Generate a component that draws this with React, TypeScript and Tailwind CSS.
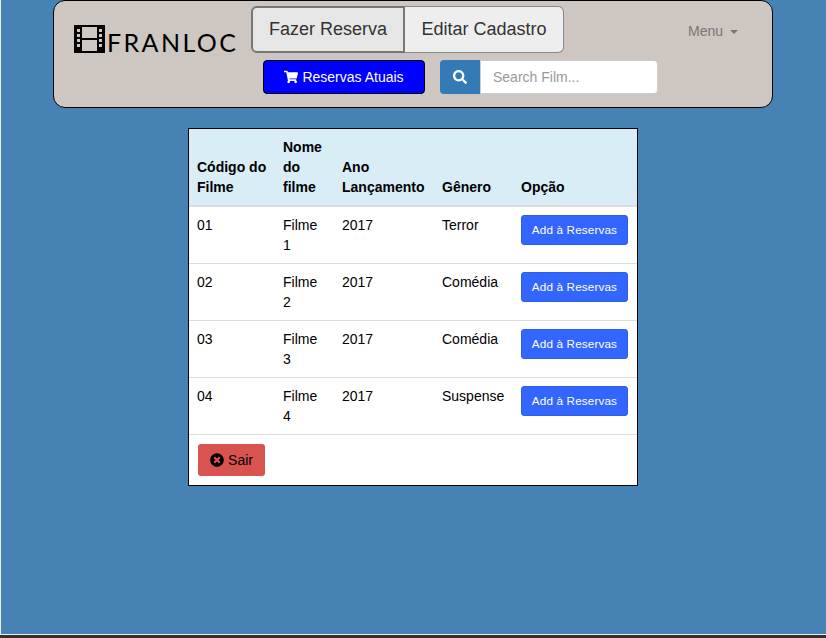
import { FaSearch, FaShoppingCart, FaTimesCircle } from 'react-icons/fa'

const filmes = [
  { codigo: '01', nome: 'Filme 1', ano: '2017', genero: 'Terror' },
  { codigo: '02', nome: 'Filme 2', ano: '2017', genero: 'Comédia' },
  { codigo: '03', nome: 'Filme 3', ano: '2017', genero: 'Comédia' },
  { codigo: '04', nome: 'Filme 4', ano: '2017', genero: 'Suspense' },
]

function FilmLogo() {
  return (
    <svg width="31" height="28" viewBox="0 0 31 28" className="shrink-0">
      <rect x="1" y="1" width="29" height="26" fill="none" stroke="#000" strokeWidth="2" />
      <rect x="1" y="1" width="7" height="26" fill="#000" />
      <rect x="23" y="1" width="7" height="26" fill="#000" />
      <path d="M8 14h15" stroke="#000" strokeWidth="2" />
      {[4, 9, 14, 19].map((y) => (
        <g key={y} fill="#cdc6c1">
          <rect x="3" y={y} width="3" height="3" />
          <rect x="25" y={y} width="3" height="3" />
        </g>
      ))}
    </svg>
  )
}

export default function App() {
  return (
    <div className="h-[638px] w-[826px] overflow-hidden bg-[#333] font-['Liberation_Sans',Arial,sans-serif] text-sm text-black">
      <div className="h-[635px] border-b border-l border-[#eee] bg-[#4682b4]">
        <header className="ml-[52px] flex h-[108px] w-[720px] rounded-[12px] border border-black bg-[#cdc6c1]">
          <div className="ml-[20px] mt-[24px] flex h-[30px] w-[177px] shrink-0 items-start">
            <FilmLogo />
            <span className="ml-[2px] mt-[4px] whitespace-nowrap font-['Lato',sans-serif] text-[25px] leading-[26px] tracking-[2.4px]">FRANLOC</span>
          </div>

          <div className="flex shrink-0 flex-col">
            <div className="mt-[5px] flex text-[18px] text-[#333]">
              <button className="h-[47px] w-[154px] rounded-l-[6px] border-2 border-[#777] bg-[#e6e6e6]">Fazer Reserva</button>
              <button className="h-[47px] w-[159px] rounded-r-[6px] border border-l-0 border-[#888] bg-[#eee]">Editar Cadastro</button>
            </div>
            <div className="ml-[12px] mt-[7px] flex">
              <button className="flex h-[34px] w-[162px] items-center justify-center gap-[4px] rounded-[4px] border border-black bg-[#0000ff] text-white">
                <FaShoppingCart className="text-[14px]" />
                Reservas Atuais
              </button>
              <div className="ml-[15px] flex">
                <button className="flex h-[34px] w-[40px] items-center justify-center rounded-l-[4px] bg-[#337ab7] text-white">
                  <FaSearch className="text-[14px]" />
                </button>
                <input
                  placeholder="Search Film..."
                  className="h-[34px] w-[178px] rounded-r-[4px] border border-[#ccc] bg-white px-3 text-sm placeholder:text-[#999]"
                />
              </div>
            </div>
          </div>

          <div className="ml-[30px] mt-[20px] flex h-5 shrink-0 items-center text-[#777]">
            Menu
            <span className="ml-[7px] mt-[2px] border-x-4 border-t-4 border-x-transparent border-t-[#777]" />
          </div>
        </header>

        <main className="ml-[187px] mt-5 w-[450px] border border-black bg-white">
          <table className="w-[448px] table-fixed border-collapse">
            <colgroup>
              <col className="w-[86px]" />
              <col className="w-[59px]" />
              <col className="w-[100px]" />
              <col className="w-[79px]" />
              <col className="w-[124px]" />
            </colgroup>
            <thead>
              <tr className="h-[77px] border-b-2 border-[#ddd] bg-[#d9edf7] text-left align-bottom">
                <th className="p-2 font-bold">Código do Filme</th>
                <th className="p-2 font-bold">Nome do filme</th>
                <th className="p-2 font-bold">Ano Lançamento</th>
                <th className="p-2 font-bold">Gênero</th>
                <th className="p-2 font-bold">Opção</th>
              </tr>
            </thead>
            <tbody>
              {filmes.map((f) => (
                <tr key={f.codigo} className="h-[57px] border-b border-[#ddd] align-top">
                  <td className="p-2">{f.codigo}</td>
                  <td className="p-2">{f.nome}</td>
                  <td className="p-2">{f.ano}</td>
                  <td className="p-2">{f.genero}</td>
                  <td className="p-2">
                    <button className="h-[30px] w-[107px] rounded-[3px] border border-[#2e5fe0] bg-[#3366ff] pt-[1px] text-[11.7px] tracking-[0.15px] text-white">
                      Add à Reservas
                    </button>
                  </td>
                </tr>
              ))}
            </tbody>
          </table>
          <div className="h-[50px] pl-[9px] pt-[9px]">
            <button className="flex h-[32px] w-[67px] items-center justify-center gap-[4px] rounded-[3px] bg-[#d9534f]">
              <FaTimesCircle className="text-[14px]" />
              Sair
            </button>
          </div>
        </main>
      </div>
    </div>
  )
}
